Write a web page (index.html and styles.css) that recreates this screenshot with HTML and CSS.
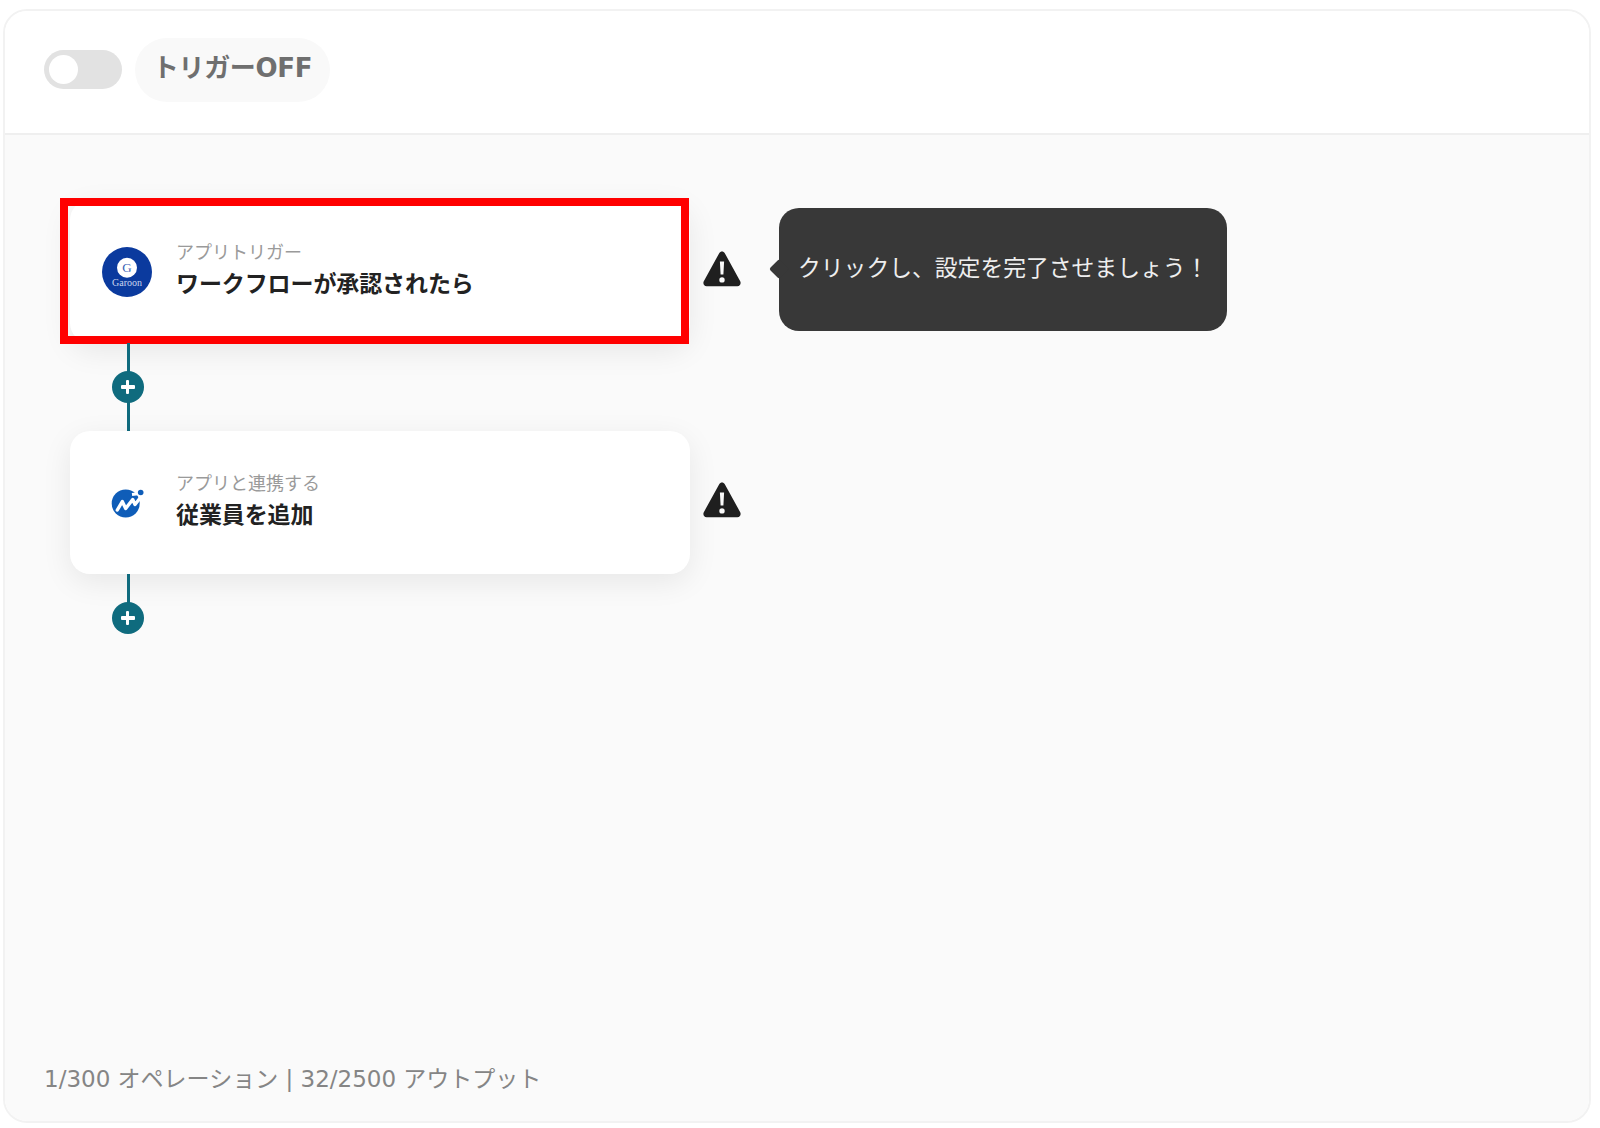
FILE: index.html
```html
<!DOCTYPE html>
<html lang="ja">
<head>
<meta charset="utf-8">
<title>フロー</title>
<link rel="stylesheet" href="styles.css">
</head>
<body>
<main class="panel">
  <header class="panel-head">
    <span class="toggle"><span class="knob"></span></span>
    <span class="chip">トリガーOFF</span>
  </header>
  <section class="panel-body">
    <div class="flow">
      <div class="step step-first">
        <div class="card">
          <svg class="app-icon" viewBox="0 0 50 50" aria-hidden="true">
            <circle cx="25" cy="25" r="25" fill="#0b3a9e"/>
            <circle cx="25" cy="20.700" r="10" fill="#fff"/>
            <text x="25" y="25" class="g-letter">G</text>
            <text x="25" y="38.500" class="g-name">Garoon</text>
          </svg>
          <div class="card-text">
            <div class="label">アプリトリガー</div>
            <div class="title">ワークフローが承認されたら</div>
          </div>
        </div>
        <span class="highlight"></span>
        <svg class="warn" viewBox="0 0 38 36" aria-hidden="true">
          <path fill="#1f1f1f" fill-rule="evenodd" d="M16.200 2.200c1.300-2.200 4.300-2.200 5.600 0l15.400 28c1.200 2.300-.3 5-2.800 5H3.600c-2.500 0-4-2.700-2.800-5zM16.900 10.500l.7 13h2.800l.7-13zM19 26.200a2.700 2.700 0 1 0 0 5.400 2.700 2.700 0 0 0 0-5.400z"/>
        </svg>
        <div class="tip">クリックし、設定を完了させましょう！</div>
      </div>
      <div class="link link-mid">
        <span class="plus"></span>
      </div>
      <div class="step">
        <div class="card">
          <svg class="app-icon" viewBox="0 0 50 50" aria-hidden="true">
            <circle cx="23.700" cy="25.500" r="14" fill="#0f5db8"/>
            <path fill="none" stroke="#fff" stroke-width="3" d="M30 16.500l8 -1"/>
            <circle cx="38.700" cy="14.500" r="2.800" fill="#0f5db8"/>
            <path fill="none" stroke="#fff" stroke-width="3.400" stroke-linecap="round" stroke-linejoin="round" d="M15.300 32l5-8.500 3.400 7 7-9 2.300 5 5.500-7"/>
          </svg>
          <div class="card-text">
            <div class="label">アプリと連携する</div>
            <div class="title">従業員を追加</div>
          </div>
        </div>
        <svg class="warn" viewBox="0 0 38 36" aria-hidden="true">
          <path fill="#1f1f1f" fill-rule="evenodd" d="M16.200 2.200c1.300-2.200 4.300-2.200 5.600 0l15.400 28c1.200 2.300-.3 5-2.800 5H3.600c-2.500 0-4-2.700-2.800-5zM16.900 10.500l.7 13h2.800l.7-13zM19 26.200a2.700 2.700 0 1 0 0 5.400 2.700 2.700 0 0 0 0-5.400z"/>
        </svg>
      </div>
      <div class="link link-end">
        <span class="plus"></span>
      </div>
    </div>
    <footer class="usage">1/300 オペレーション | 32/2500 アウトプット</footer>
  </section>
</main>
</body>
</html>
```
FILE: styles.css
```css
* { box-sizing: border-box; }
html, body { margin: 0; height: 100%; background: #fff; }
body {
  padding: 9px 9px 5px 3px;
  font-family: "Noto Sans CJK JP", "Noto Sans", sans-serif;
}
.panel {
  height: 1114px;
  border: 2px solid #f2f2f2;
  border-radius: 24px;
  overflow: hidden;
  display: flex;
  flex-direction: column;
}
.panel-head {
  height: 124px;
  flex: none;
  background: #fff;
  border-bottom: 2px solid #efefef;
  display: flex;
  align-items: center;
  padding: 0 0 5px 39px;
  gap: 13px;
}
.toggle {
  width: 78px;
  height: 39px;
  border-radius: 20px;
  background: #e2e2e2;
  padding: 5px;
  display: block;
}
.knob {
  display: block;
  width: 29px;
  height: 29px;
  border-radius: 50%;
  background: #fff;
}
.chip {
  height: 64px;
  width: 195px;
  border-radius: 32px;
  background: #f9f9f9;
  color: #6f6f6f;
  font-family: "DejaVu Sans", "Noto Sans CJK JP", sans-serif;
  font-size: 26px;
  font-weight: 700;
  letter-spacing: -0.3px;
  display: flex;
  align-items: center;
  justify-content: center;
  padding-bottom: 8px;
}
.panel-body {
  flex: 1;
  background: #fafafa;
  display: flex;
  flex-direction: column;
  justify-content: space-between;
  padding: 65px 0 25px 39px;
  min-height: 0;
}
.flow { display: flex; flex-direction: column; align-items: flex-start; }
.step {
  position: relative;
  display: flex;
  align-items: center;
  padding-left: 26px;
}
.card {
  width: 620px;
  height: 143px;
  background: #fff;
  border-radius: 20px;
  box-shadow: 0 8px 30px rgba(0, 0, 0, 0.08);
  display: flex;
  align-items: center;
  padding-left: 32px;
  gap: 24px;
}
.app-icon { width: 50px; height: 50px; flex: none; }
.g-letter {
  font-family: "Liberation Serif", serif;
  font-size: 13px;
  fill: #3a5fb5;
  text-anchor: middle;
}
.g-name {
  font-family: "Liberation Serif", serif;
  font-size: 10px;
  fill: #c9d4ee;
  text-anchor: middle;
}
.card-text { display: flex; flex-direction: column; gap: 1px; padding-bottom: 7px; }
.label { font-size: 18px; line-height: 26px; color: #9a9a9a; }
.title { font-size: 23px; line-height: 34px; font-weight: 700; color: #222; letter-spacing: -0.1px; }
.highlight {
  position: absolute;
  left: 16px;
  top: -2px;
  width: 629px;
  height: 146px;
  border: 8px solid #ff0000;
  pointer-events: none;
}
.warn { width: 38px; height: 36px; margin-left: 13px; flex: none; margin-bottom: 5px; }
.tip {
  position: absolute;
  left: 735px;
  top: 8px;
  width: 448px;
  height: 123px;
  border-radius: 20px;
  background: #383838;
  color: #eee;
  font-size: 22.800px;
  display: flex;
  align-items: center;
  padding: 0 0 6px 19px;
  white-space: nowrap;
}
.tip::before {
  content: "";
  position: absolute;
  left: -7px;
  top: 54px;
  width: 14px;
  height: 14px;
  background: #383838;
  transform: rotate(45deg);
  border-radius: 2px;
}
.link {
  position: relative;
  margin-left: 83px;
  width: 3px;
  background: #0f6b7e;
}
.link-mid { height: 88px; }
.link-end { height: 30px; }
.plus {
  position: absolute;
  left: 50%;
  width: 32px;
  height: 32px;
  margin-left: -17px;
  border-radius: 50%;
  background: #0f6b7e;
}
.link-mid .plus { top: 28px; }
.link-end .plus { top: 28px; }
.plus::before, .plus::after {
  content: "";
  position: absolute;
  background: #fff;
  border-radius: 1px;
}
.plus::before { left: 9px; top: 14.250px; width: 14px; height: 3.500px; }
.plus::after { left: 14.250px; top: 9px; width: 3.500px; height: 14px; }
.usage {
  font-family: "DejaVu Sans", "Noto Sans CJK JP", sans-serif;
  font-size: 23px;
  line-height: 34px;
  color: #858585;
  margin-top: auto;
}
```
